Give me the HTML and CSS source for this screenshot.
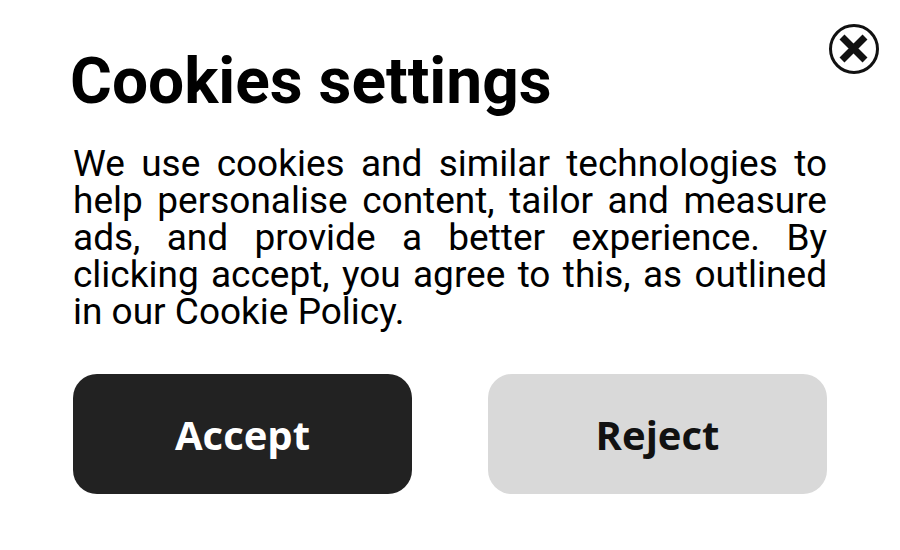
FILE: index.html
```html
<!DOCTYPE html>
<html lang="en">
<head>
<meta charset="utf-8">
<title>Cookies settings</title>
<link rel="stylesheet" href="styles.css">
</head>
<body>
<div class="dialog">
  <button class="close" aria-label="Close">
    <svg width="52" height="52" viewBox="0 0 52 52">
      <circle cx="26" cy="26" r="23.5" fill="none" stroke="#111" stroke-width="3"/>
      <path d="M14 14 L37 37 M37 14 L14 37" stroke="#111" stroke-width="7" fill="none"/>
    </svg>
  </button>
  <h1 class="title">Cookies settings</h1>
  <p class="text">We use cookies and similar technologies to help personalise content, tailor and measure ads, and provide a better experience. By clicking accept, you agree to this, as outlined in our Cookie Policy.</p>
  <div class="actions">
    <button class="btn btn-accept">Accept</button>
    <button class="btn btn-reject">Reject</button>
  </div>
</div>
</body>
</html>
```
FILE: styles.css
```css
html, body {
  margin: 0;
  padding: 0;
  background: #fff;
}
.dialog {
  position: relative;
  width: 900px;
  height: 550px;
  box-sizing: border-box;
  padding: 44px 73px 0 73px;
  font-family: Roboto, "Liberation Sans", sans-serif;
  color: #000;
}
.close {
  position: absolute;
  top: 23px;
  left: 828px;
  width: 52px;
  height: 52px;
  padding: 0;
  border: 0;
  background: none;
  cursor: pointer;
}
.close svg {
  display: block;
}
.title {
  margin: 0 0 0 -3px;
  font-size: 64px;
  font-weight: 700;
  line-height: 75px;
}
.text {
  margin: 26px 0 0 0;
  font-size: 37px;
  line-height: 37px;
  text-align: justify;
}
.actions {
  display: flex;
  gap: 76px;
  margin-top: 44px;
}
.btn {
  flex: 1;
  height: 120px;
  border: 0;
  border-radius: 24px;
  font-family: "Open Sans", sans-serif;
  font-weight: 700;
  font-size: 40px;
  display: flex;
  align-items: center;
  justify-content: center;
  padding: 0;
}
.btn-accept {
  background: #222222;
  color: #fff;
}
.btn-reject {
  background: #d9d9d9;
  color: #111;
}
```
